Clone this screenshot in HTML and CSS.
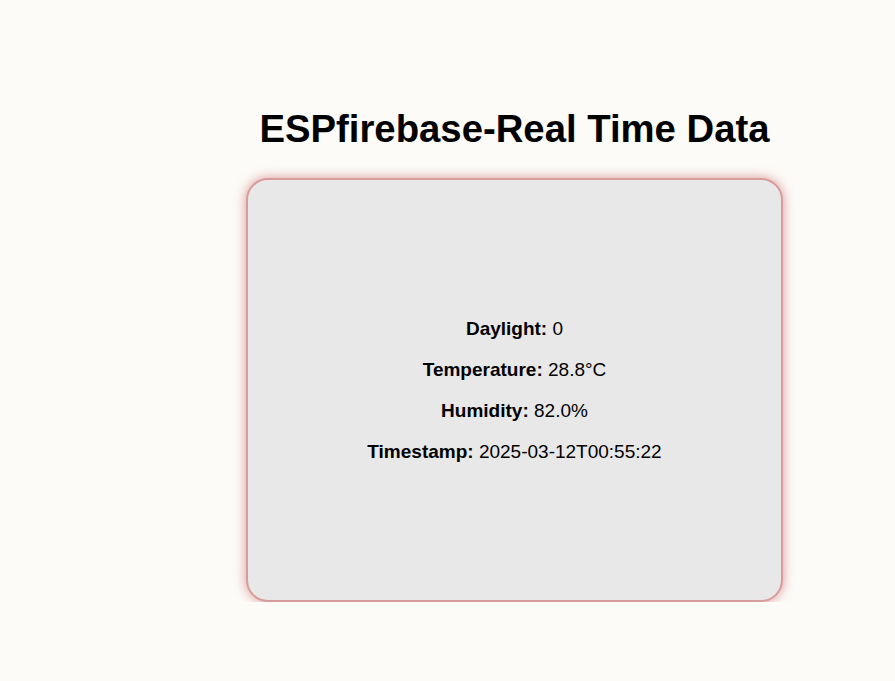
FILE: index.html
```html
<!DOCTYPE html>
<html>
<head>
<meta charset="utf-8">
<link rel="stylesheet" href="styles.css">
</head>
<body>
<main class="wrap">
  <h1 class="title">ESPfirebase-Real Time Data</h1>
  <section class="card">
    <p class="row"><strong>Daylight:</strong> 0</p>
    <p class="row"><strong>Temperature:</strong> 28.8°C</p>
    <p class="row"><strong>Humidity:</strong> 82.0%</p>
    <p class="row"><strong>Timestamp:</strong> 2025-03-12T00:55:22</p>
  </section>
</main>
</body>
</html>
```
FILE: styles.css
```css
html, body {
  margin: 0;
  padding: 0;
  background: #fcfbf8;
  font-family: "Liberation Sans", Arial, sans-serif;
  color: #000;
}
.wrap {
  width: 537px;
  margin-left: 246px;
  padding-top: 107px;
}
.title {
  margin: 0 0 27px;
  font-size: 38.3px;
  line-height: 44px;
  text-align: center;
  font-weight: bold;
}
.card {
  box-sizing: border-box;
  height: 424px;
  background: #e9e8e8;
  border: 2px solid #d89c9c;
  border-radius: 22px;
  box-shadow: 0 0 12px rgba(190, 50, 50, 0.5);
  display: flex;
  flex-direction: column;
  justify-content: center;
  align-items: center;
  gap: 19px;
}
.row {
  margin: 0;
  font-size: 19px;
  line-height: 22px;
}
```
